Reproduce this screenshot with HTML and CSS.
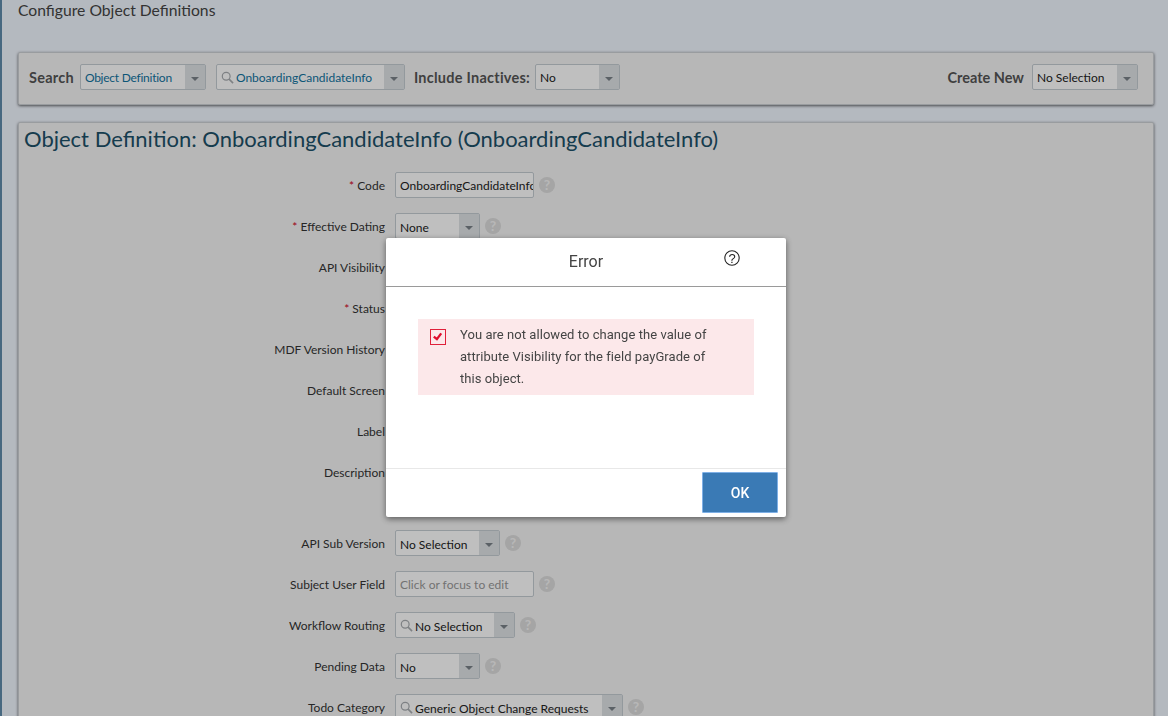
FILE: index.html
```html
<!DOCTYPE html>
<html lang="en">
<head>
<meta charset="utf-8">
<title>Configure Object Definitions</title>
<link rel="stylesheet" href="styles.css">
</head>
<body>
<svg class="defs" width="0" height="0" aria-hidden="true">
  <symbol id="lens" viewBox="0 0 14 14"><circle cx="5.6" cy="5.6" r="4.2" fill="none" stroke="currentColor" stroke-width="1.3"/><path d="M8.7 8.7 13 13" fill="none" stroke="currentColor" stroke-width="1.7"/></symbol>
</svg>
<div class="page">
  <h1 class="page-title">Configure Object Definitions</h1>

  <section class="panel search-bar">
    <span class="bar-label first">Search</span>
    <div class="combo w-126 link"><span class="combo-value snug">Object Definition</span><span class="combo-btn"></span></div>
    <div class="combo w-189 link ml-10"><svg class="lens"><use href="#lens"/></svg><span class="combo-value tight">OnboardingCandidateInfo</span><span class="combo-btn"></span></div>
    <span class="bar-label ml-9">Include Inactives:</span>
    <div class="combo w-85"><span class="combo-value">No</span><span class="combo-btn"></span></div>
    <span class="bar-label push">Create New</span>
    <div class="combo w-106"><span class="combo-value">No Selection</span><span class="combo-btn"></span></div>
  </section>

  <section class="panel detail">
    <h2 class="detail-title">Object Definition: OnboardingCandidateInfo (OnboardingCandidateInfo)</h2>
    <div class="form">
      <div class="row"><label class="row-label"><i>*</i> Code</label><div class="text-input w-139">OnboardingCandidateInfo</div><span class="help">?</span></div>
      <div class="row"><label class="row-label"><i>*</i> Effective Dating</label><div class="combo w-85"><span class="combo-value">None</span><span class="combo-btn"></span></div><span class="help">?</span></div>
      <div class="row"><label class="row-label">API Visibility</label></div>
      <div class="row"><label class="row-label"><i>*</i> Status</label></div>
      <div class="row"><label class="row-label">MDF Version History</label></div>
      <div class="row"><label class="row-label">Default Screen</label></div>
      <div class="row"><label class="row-label">Label</label></div>
      <div class="row row-tall"><label class="row-label">Description</label></div>
      <div class="row"><label class="row-label">API Sub Version</label><div class="combo w-105"><span class="combo-value">No Selection</span><span class="combo-btn"></span></div><span class="help">?</span></div>
      <div class="row"><label class="row-label">Subject User Field</label><div class="text-input w-139 placeholder">Click or focus to edit</div><span class="help">?</span></div>
      <div class="row"><label class="row-label">Workflow Routing</label><div class="combo w-120"><svg class="lens"><use href="#lens"/></svg><span class="combo-value tight">No Selection</span><span class="combo-btn"></span></div><span class="help">?</span></div>
      <div class="row"><label class="row-label">Pending Data</label><div class="combo w-85"><span class="combo-value">No</span><span class="combo-btn"></span></div><span class="help">?</span></div>
      <div class="row"><label class="row-label">Todo Category</label><div class="combo w-228"><svg class="lens"><use href="#lens"/></svg><span class="combo-value tight">Generic Object Change Requests</span><span class="combo-btn"></span></div><span class="help">?</span></div>
    </div>
  </section>
</div>

<div class="scrim"></div>

<div class="dialog" role="dialog" aria-labelledby="dlg-title">
  <header class="dialog-head">
    <h3 class="dialog-title" id="dlg-title">Error</h3>
    <svg class="dialog-help" viewBox="0 0 16 16" aria-label="Help"><circle cx="8" cy="8" r="7.2" fill="none" stroke="#222" stroke-width="1.1"/><text x="8" y="12.5" text-anchor="middle" class="q">?</text></svg>
  </header>
  <div class="dialog-body">
    <div class="alert">
      <span class="alert-check"><svg viewBox="0 0 16 16" width="16" height="16"><path d="M3.8 7.6 6.9 10.2 11.2 4.4" fill="none" stroke="#e0102f" stroke-width="2.3"/></svg></span>
      <p class="alert-text">You are not allowed to change the value of attribute Visibility for the field payGrade of this object.</p>
    </div>
  </div>
  <footer class="dialog-foot"><button class="ok-btn" type="button">OK</button></footer>
</div>
</body>
</html>
```
FILE: styles.css
```css
* { box-sizing: border-box; }
html, body { margin: 0; height: 100%; }
body { overflow: hidden; font-family: Lato, "Open Sans", sans-serif; color: #333; background: #f1f7ff; }
.defs { position: absolute; }

.page { height: 716px; overflow: hidden; border-left: 2px solid #5f8bab; padding: 0 14px 0 16px; }
.page-title { margin: 0; height: 52px; font-size: 15.7px; line-height: 20px; font-weight: 400; color: #444; }

.panel { background: #f5f5f5; border: 1px solid #cdd1d5; border-radius: 2px; box-shadow: 0 1px 3px rgba(0,0,0,.6); }
.search-bar { display: flex; align-items: center; height: 53px; padding: 0 15px 3px 10px; margin-bottom: 17px; }
.bar-label { font-size: 14.5px; font-weight: 700; letter-spacing: .25px; color: #555; margin-right: 5px; white-space: nowrap; }
.bar-label.first { margin-right: 6px; }
.push { margin-left: auto; margin-right: 8px; letter-spacing: 0; }
.ml-10 { margin-left: 10px; }
.ml-9 { margin-left: 9px; }

.combo { display: flex; align-items: center; height: 26px; background: #fff; border: 1px solid #c4ccd2; border-radius: 2px; font-size: 12px; color: #222; flex: none; }
.combo-value { flex: 1; padding-left: 4px; white-space: nowrap; overflow: hidden; padding-top: 1px; }
.form .combo-value { padding-top: 3px; }
.combo-value.tight { padding-left: 2px; }
.combo-value.snug { letter-spacing: -.25px; }
.combo-btn { flex: none; width: 20px; align-self: stretch; background: #dfe3e6; position: relative; }
.combo-btn::after { content: ""; position: absolute; left: 6px; top: 12px; border: 4px solid transparent; border-top: 4px solid #7a8288; border-bottom: 0; }
.link { color: #10739f; }
.lens { flex: none; width: 13px; height: 13px; margin-left: 4px; color: #a8acb0; }
.w-85 { width: 85px; } .w-105 { width: 105px; } .w-106 { width: 106px; } .w-120 { width: 120px; }
.w-126 { width: 126px; } .w-139 { width: 139px; } .w-189 { width: 189px; } .w-228 { width: 228px; }

.detail { height: 640px; padding: 0 5px; }
.detail-title { margin: 0; height: 49px; padding-top: 2px; font-size: 22px; line-height: 27px; font-weight: 400; color: #1c5068; white-space: nowrap; }
.form { display: flex; flex-direction: column; }
.row { display: flex; align-items: center; height: 26px; margin-bottom: 15px; }
.row-tall { height: 56px; align-items: flex-start; }
.row-tall .row-label { padding-top: 6px; }
.row-label { flex: none; width: 371px; padding-right: 10px; text-align: right; font-size: 12px; color: #333; white-space: nowrap; }
.row-label i { color: #d0021b; font-style: normal; }
.text-input { flex: none; height: 26px; line-height: 25px; padding: 0 4px; background: #fff; border: 1px solid #c4ccd2; border-radius: 2px; font-size: 12px; color: #222; overflow: hidden; white-space: nowrap; }
.placeholder { color: #999; }
.help { flex: none; width: 16px; height: 16px; margin-left: 5px; border-radius: 50%; background: #dcdcdc; color: #f5f5f5; font-size: 14px; font-weight: 700; line-height: 16px; text-align: center; }

.scrim { position: fixed; inset: 0; background: rgba(0,0,0,.25); }

.dialog { position: fixed; left: 386px; top: 238px; width: 400px; height: 279px; display: flex; flex-direction: column; background: #fff; border-radius: 2px; box-shadow: 0 2px 6px rgba(0,0,0,.5); font-family: Roboto, "Liberation Sans", sans-serif; }
.dialog-head { flex: none; height: 49px; position: relative; border-bottom: 1px solid #9a9a9a; display: flex; align-items: center; justify-content: center; padding-bottom: 2px; }
.dialog-title { margin: 0; font-size: 16px; font-weight: 400; color: #444; }
.dialog-help { position: absolute; left: 338px; top: 12px; width: 16px; height: 16px; }
.q { font-size: 13px; fill: #222; font-family: "Liberation Sans", sans-serif; }
.dialog-body { flex: 1; padding: 32px 32px 0; }
.alert { display: flex; align-items: flex-start; width: 336px; height: 76px; padding: 5px 40px 0 12px; background: #fce8ea; }
.alert-check { flex: none; width: 16px; height: 16px; margin-top: 5px; margin-right: 14px; border: 1px solid #e0203a; display: flex; align-items: center; justify-content: center; }
.alert-check svg { flex: none; }
.alert-text { margin: 0; font-size: 13px; letter-spacing: .05px; line-height: 22px; color: #444; }
.dialog-foot { flex: none; height: 49px; border-top: 1px solid #e8e8e8; display: flex; justify-content: flex-end; align-items: flex-start; padding: 3px 8px 0 0; }
.ok-btn { width: 76px; height: 41px; background: #3a7ab5; border: 1px solid #7fb0e6; color: #fff; font: 500 14px/1 Roboto, sans-serif; border-radius: 1px; }
```
